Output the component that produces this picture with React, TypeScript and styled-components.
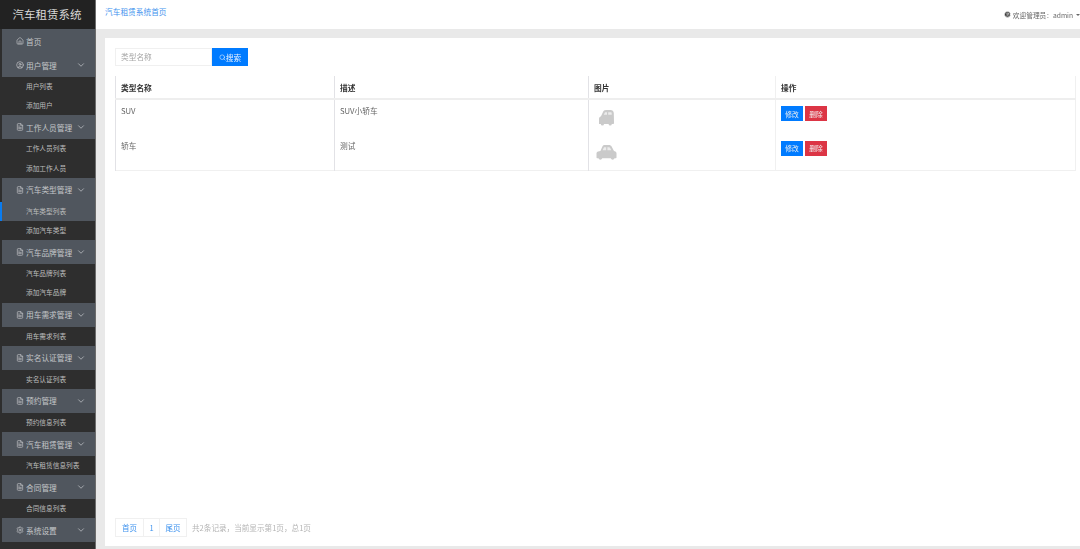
import * as React from "react";
import styled, { createGlobalStyle } from "styled-components";
import { ChevronDown, FileText, Home, Search, Settings, CircleUser } from "lucide-react";

const GlobalStyle = createGlobalStyle`
  html, body {
    margin: 0;
    padding: 0;
    height: 100%;
    overflow: hidden;
    background: #e9e9e9;
    font-family: "Noto Sans CJK SC", "Liberation Sans", sans-serif;
  }
`;

const Page = styled.div`
  display: flex;
  width: 1080px;
  height: 549px;
  overflow: hidden;
  /* the reference is a soft, downscaled capture */
  filter: blur(0.35px);
`;

const Sidebar = styled.aside`
  width: 96px;
  flex: none;
  background: #2e2e2e;
  border-right: 1px solid #6d6d6d;
  box-sizing: border-box;
  overflow: hidden;
`;

const Logo = styled.div`
  height: 29px;
  line-height: 28px;
  background: #222;
  color: #d8d8d8;
  font-size: 11.5px;
  text-align: center;
  padding-right: 1px;
`;

const MenuHead = styled.div`
  display: flex;
  align-items: center;
  height: 24px;
  margin-left: 2px;
  padding-left: 14px;
  background: #50565e;
  color: #c4c6c9;
  font-size: 7.7px;
  gap: 2px;
  svg:first-child {
    width: 8px;
    height: 8px;
    flex: none;
  }
`;

const HeadLabel = styled.span`
  flex: 1;
  white-space: nowrap;
`;

const Chevron = styled(ChevronDown)`
  width: 10px;
  height: 10px;
  margin-right: 9px;
  color: #b4b8bd;
  flex: none;
`;

const SubItem = styled.div<{ $active?: boolean }>`
  height: 19.2px;
  line-height: 19.2px;
  padding-left: 26px;
  font-size: 6.7px;
  color: #bdbdbd;
  white-space: nowrap;
  background: ${(p) => (p.$active ? "#50565e" : "transparent")};
  border-left: 2px solid ${(p) => (p.$active ? "#0a7cf0" : "transparent")};
  box-sizing: border-box;
  text-indent: -2px;
`;

const Right = styled.div`
  flex: 1;
  min-width: 0;
  display: flex;
  flex-direction: column;
`;

const TopBar = styled.header`
  height: 29px;
  flex: none;
  background: #fff;
  display: flex;
  justify-content: space-between;
  padding: 0 0 0 9px;
  font-size: 7.7px;
`;

const HomeLink = styled.a`
  color: #3f93ee;
  line-height: 23px;
`;

const UserBox = styled.div`
  display: flex;
  align-items: center;
  height: 29px;
  gap: 2px;
  font-size: 6.7px;
  color: #666;
  white-space: nowrap;
  svg {
    width: 7px;
    height: 7px;
    color: #fff;
    fill: #333;
  }
`;

const Caret = styled.span`
  width: 0;
  height: 0;
  margin-left: 1px;
  border-left: 2px solid transparent;
  border-right: 2px solid transparent;
  border-top: 2px solid #666;
`;

const Main = styled.main`
  flex: 1;
  min-height: 0;
  padding: 9px 0 3px 9px;
  display: flex;
`;

const Card = styled.section`
  flex: 1;
  min-width: 0;
  background: #fff;
  padding: 10px 5px 9px 10px;
  display: flex;
  flex-direction: column;
`;

const SearchRow = styled.form`
  display: flex;
  height: 18px;
  margin-bottom: 10px;
`;

const SearchInput = styled.div`
  width: 97px;
  box-sizing: border-box;
  border: 1px solid #f0f0f0;
  padding-left: 5px;
  font-size: 7.7px;
  line-height: 16px;
  color: #a5a5a5;
`;

const SearchButton = styled.div`
  width: 36px;
  background: #007bff;
  color: #e6f1ff;
  font-size: 7.7px;
  display: flex;
  align-items: center;
  justify-content: center;
  svg {
    width: 7px;
    height: 7px;
  }
`;

const Table = styled.table`
  width: 960px;
  table-layout: fixed;
  border-collapse: collapse;
  font-size: 7.7px;
  color: #666;
  border-bottom: 1px solid #f0f0f0;
  border-right: 1px solid #f0f0f0;
`;

const HeadCell = styled.th<{ $w: number; $soft?: boolean }>`
  width: ${(p) => p.$w}px;
  box-sizing: border-box;
  height: 23px;
  padding: 0 5px;
  text-align: left;
  font-weight: 700;
  color: #333;
  border-bottom: 2px solid #eeeeee;
  border-left: 1px solid ${(p) => (p.$soft ? "#f0f0f0" : "#e2e2e6")};
`;

const Cell = styled.td<{ $soft?: boolean }>`
  height: 35.5px;
  box-sizing: border-box;
  padding: 5px 5px 0;
  vertical-align: top;
  border-left: 1px solid ${(p) => (p.$soft ? "#f0f0f0" : "#e2e2e6")};
  line-height: 11px;
`;

const ActionCell = styled(Cell)`
  padding-top: 6px;
`;

const CarCell = styled(Cell)<{ $inset: number }>`
  padding: 0 0 0 ${(p) => p.$inset}px;
  vertical-align: middle;
  svg {
    display: block;
  }
`;

const ActionButton = styled.button<{ $danger?: boolean }>`
  width: 22px;
  height: 15px;
  padding: 0;
  margin-right: 2px;
  border: 0;
  background: ${(p) => (p.$danger ? "#dc3545" : "#007bff")};
  color: #f2f2f2;
  font-family: inherit;
  font-size: 6.7px;
`;

const Pager = styled.div`
  margin-top: auto;
  display: flex;
  align-items: center;
  font-size: 7.5px;
  color: #b4b4b4;
`;

const PageLink = styled.span<{ $w: number }>`
  width: ${(p) => p.$w}px;
  height: 19px;
  box-sizing: border-box;
  border: 1px solid #f0f0f0;
  margin-left: -1px;
  color: #3f93ee;
  text-align: center;
  line-height: 17px;
  &:first-child {
    margin-left: 0;
  }
`;

const PagerNote = styled.span`
  margin-left: 5px;
  font-size: 7.6px;
`;

const SuvIcon = () => (
  <svg width="17" height="17" viewBox="0 0 17 17">
    <path
      fill="#cacaca"
      d="M1 15V9.8C1 8.4 1.8 7.6 3 7.2L5 3C5.6 1.6 6.6 1 8 1h4.6c1.8 0 3 1.2 3.2 3L16 14c0 .6-.4 1-1 1h-1.2a1.6 1.6 0 0 1-3.2 0H6a1.6 1.6 0 0 1-3.2 0H1z"
    />
    <path fill="#ececec" d="M7 3.2h2v2.6H5.8zM10.2 3.2h2.6c.6 0 .9.5.9 1.1v1.5h-3.5z" />
  </svg>
);

const SedanIcon = () => (
  <svg width="21" height="17" viewBox="0 0 21 17">
    <path
      fill="#cacaca"
      d="M.5 13.6V9.4c0-1 .7-1.6 1.6-1.9L4.4 7l2-4.4C7 1.4 7.8 1 9 1h4c1.1 0 2 .5 2.6 1.5L18 7l1.4.6c.7.3 1.1.9 1.1 1.7v4.3c0 .4-.3.7-.7.7h-1.3a1.9 1.9 0 0 1-3.7 0H6.2a1.9 1.9 0 0 1-3.7 0H1.2c-.4 0-.7-.3-.7-.7z"
    />
    <path fill="#ececec" d="M8 3.2h2.2v3H6.6zM11.4 3.2h1.6c.5 0 .8.2 1 .6l1.3 2.4h-3.9z" />
  </svg>
);

type MenuGroup = { label: string; icon: "home" | "user" | "file" | "gear"; subs?: string[]; arrow?: boolean };

const menu: MenuGroup[] = [
  { label: "首页", icon: "home", arrow: false },
  { label: "用户管理", icon: "user", subs: ["用户列表", "添加用户"] },
  { label: "工作人员管理", icon: "file", subs: ["工作人员列表", "添加工作人员"] },
  { label: "汽车类型管理", icon: "file", subs: ["汽车类型列表", "添加汽车类型"] },
  { label: "汽车品牌管理", icon: "file", subs: ["汽车品牌列表", "添加汽车品牌"] },
  { label: "用车需求管理", icon: "file", subs: ["用车需求列表"] },
  { label: "实名认证管理", icon: "file", subs: ["实名认证列表"] },
  { label: "预约管理", icon: "file", subs: ["预约信息列表"] },
  { label: "汽车租赁管理", icon: "file", subs: ["汽车租赁信息列表"] },
  { label: "合同管理", icon: "file", subs: ["合同信息列表"] },
  { label: "系统设置", icon: "gear" },
];

const icons = { home: Home, user: CircleUser, file: FileText, gear: Settings };

const App: React.FC = () => {
  return (
    <Page>
      <GlobalStyle />
      <Sidebar>
        <Logo>汽车租赁系统</Logo>
        {menu.map((group) => {
          const Icon = icons[group.icon];
          return (
            <div key={group.label}>
              <MenuHead>
                <Icon />
                <HeadLabel>{group.label}</HeadLabel>
                {group.arrow !== false && <Chevron />}
              </MenuHead>
              {group.subs?.map((sub) => (
                <SubItem key={sub} $active={sub === "汽车类型列表"}>
                  {sub}
                </SubItem>
              ))}
            </div>
          );
        })}
      </Sidebar>
      <Right>
        <TopBar>
          <HomeLink>汽车租赁系统首页</HomeLink>
          <UserBox>
            <CircleUser />
            欢迎管理员：admin
            <Caret />
          </UserBox>
        </TopBar>
        <Main>
          <Card>
            <SearchRow>
              <SearchInput>类型名称</SearchInput>
              <SearchButton>
                <Search />
                搜索
              </SearchButton>
            </SearchRow>
            <Table>
              <thead>
                <tr>
                  <HeadCell $w={219}>类型名称</HeadCell>
                  <HeadCell $w={254}>描述</HeadCell>
                  <HeadCell $w={187}>图片</HeadCell>
                  <HeadCell $w={300} $soft>操作</HeadCell>
                </tr>
              </thead>
              <tbody>
                <tr>
                  <Cell>SUV</Cell>
                  <Cell>SUV小轿车</Cell>
                  <CarCell $inset={9}>
                    <SuvIcon />
                  </CarCell>
                  <ActionCell $soft>
                    <ActionButton>修改</ActionButton>
                    <ActionButton $danger>删除</ActionButton>
                  </ActionCell>
                </tr>
                <tr>
                  <Cell>轿车</Cell>
                  <Cell>测试</Cell>
                  <CarCell $inset={7}>
                    <SedanIcon />
                  </CarCell>
                  <ActionCell $soft>
                    <ActionButton>修改</ActionButton>
                    <ActionButton $danger>删除</ActionButton>
                  </ActionCell>
                </tr>
              </tbody>
            </Table>
            <Pager>
              <PageLink $w={29}>首页</PageLink>
              <PageLink $w={17}>1</PageLink>
              <PageLink $w={28}>尾页</PageLink>
              <PagerNote>共2条记录，当前显示第1页，总1页</PagerNote>
            </Pager>
          </Card>
        </Main>
      </Right>
    </Page>
  );
};

export default App;
